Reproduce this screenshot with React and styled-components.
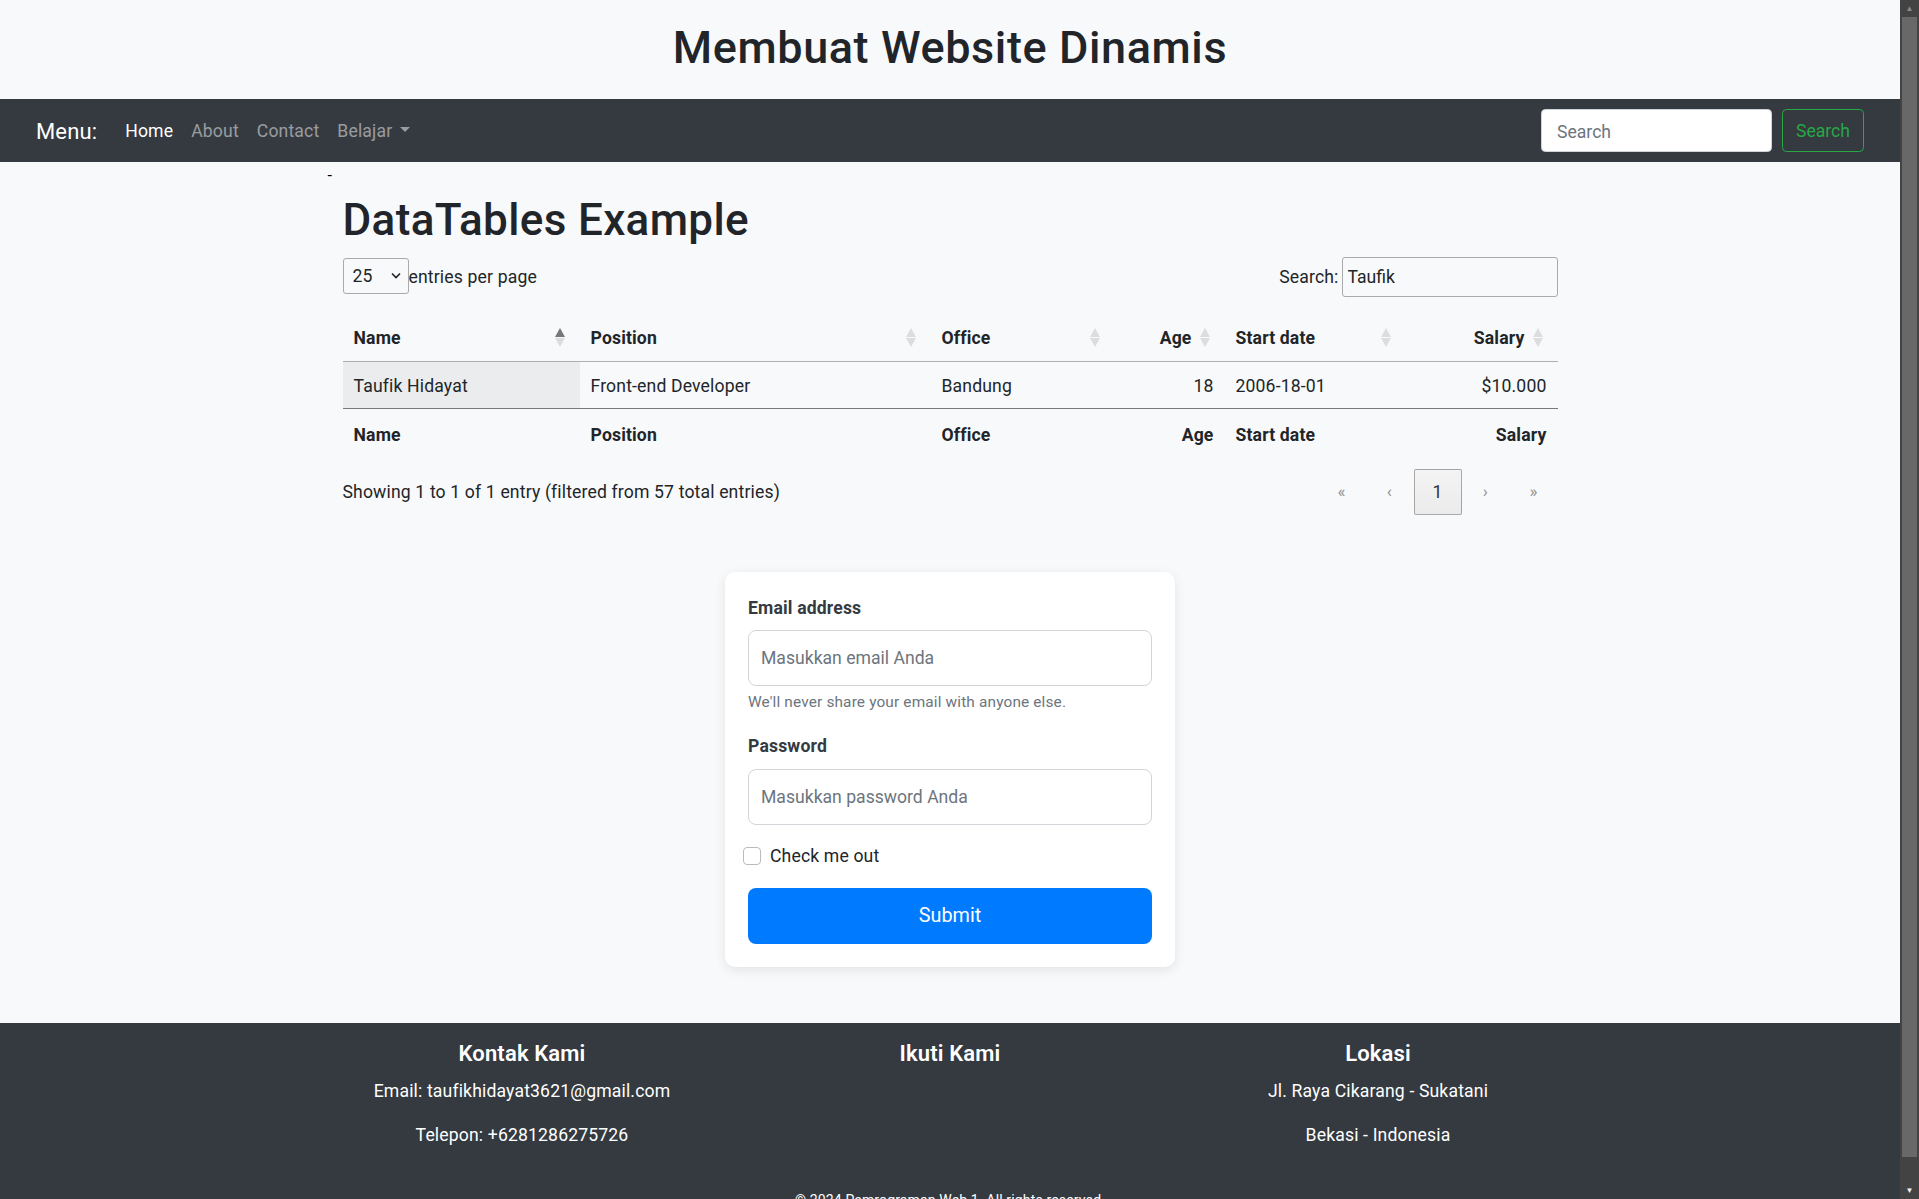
import styled, { createGlobalStyle } from 'styled-components';

const GlobalStyle = createGlobalStyle`
  html, body {
    margin: 0;
    padding: 0;
    overflow: hidden;
    background: #f8f9fa;
  }
  body {
    font-family: "Segoe UI", Roboto, "Helvetica Neue", Arial, sans-serif;
    font-size: 17.6px;
    line-height: 1.5;
    letter-spacing: 0.15px;
    color: #212529;
  }
  * { box-sizing: border-box; }
`;

const Shell = styled.div`
  display: flex;
  align-items: flex-start;
`;

const Page = styled.div`
  flex: 1;
  min-width: 0;
`;

/* fake browser scrollbar, as seen in the screenshot */
const Scrollbar = styled.div`
  width: 19px;
  height: 100vh;
  flex-shrink: 0;
  background: #434343;
  display: flex;
  flex-direction: column;
  align-items: center;
`;

const ScrollArrow = styled.div`
  height: 17px;
  display: flex;
  align-items: center;
  justify-content: center;
  color: ${p => (p.$dim ? '#8a8a8a' : '#f2f2f2')};
  font-size: 8px;
`;

const Thumb = styled.div`
  width: 15px;
  height: 1140px;
  background: #686868;
`;

const Header = styled.header`
  padding: 21px 0 25px;
  text-align: center;
`;

const Title = styled.h1`
  margin: 0;
  font-size: 45px;
  font-weight: 500;
  line-height: 53px;
  letter-spacing: 0.6px;
`;

const Navbar = styled.nav`
  display: flex;
  align-items: center;
  justify-content: space-between;
  height: 63px;
  padding: 0 36px;
  background: #343a40;
`;

const NavLeft = styled.div`
  display: flex;
  align-items: center;
  padding-top: 1px;
`;

const Brand = styled.span`
  color: #fff;
  font-size: 22px;
  margin-right: 19px;
`;

const NavLink = styled.a`
  padding: 0 9px;
  color: ${p => (p.$active ? '#fff' : 'rgba(255,255,255,0.5)')};
  text-decoration: none;
  font-size: 17.6px;
`;

const DropdownLink = styled(NavLink)`
  &::after {
    content: "";
    display: inline-block;
    margin-left: 0.45em;
    vertical-align: 0.255em;
    border-top: 0.3em solid;
    border-right: 0.3em solid transparent;
    border-left: 0.3em solid transparent;
  }
`;

const SearchForm = styled.form`
  display: flex;
  align-items: center;
  gap: 10px;
`;

const NavInput = styled.input`
  width: 231px;
  height: 43px;
  padding: 2px 15px 0;
  border: 1px solid #ced4da;
  border-radius: 4.4px;
  background: #fff;
  font: inherit;
  font-size: 17.6px;
  color: #495057;
  &::placeholder { color: #6c757d; }
`;

const OutlineButton = styled.button`
  height: 43px;
  width: 82px;
  padding-top: 2px;
  border: 1px solid #28a745;
  border-radius: 4.4px;
  background: transparent;
  color: #28a745;
  font: inherit;
  font-size: 17.6px;
`;

const Main = styled.main`
  padding-top: 2px;
`;

const Container = styled.div`
  width: 1215px;
  margin: 0 auto;
`;

const Stray = styled.div`
  margin-left: -15px;
  height: 24px;
  line-height: 24px;
  font-size: 16px;
  color: #000;
`;

const PageTitle = styled.h1`
  margin: 6px 0 9px;
  font-size: 44px;
  font-weight: 500;
  line-height: 1.2;
  letter-spacing: 0.35px;
`;

const TopBar = styled.div`
  display: flex;
  align-items: center;
  justify-content: space-between;
  height: 40px;
`;

const LengthControl = styled.label`
  display: flex;
  align-items: center;
  padding-top: 3px;
`;

const SelectWrap = styled.span`
  position: relative;
  display: inline-flex;
  margin-top: -3px;
`;

const Select = styled.select`
  appearance: none;
  width: 66px;
  height: 36px;
  padding: 0 0 0 9px;
  border: 1px solid #aaa;
  border-radius: 3px;
  background: transparent;
  font: inherit;
  font-size: 17.6px;
  color: #212529;
`;

const Chevron = styled.svg`
  position: absolute;
  right: 8px;
  top: 14px;
  pointer-events: none;
`;

const SearchLabel = styled.label`
  display: flex;
  align-items: center;
  padding-top: 2px;
`;

const FilterInput = styled.input`
  width: 216px;
  height: 40px;
  margin-left: 3px;
  padding: 1px 5px 0;
  border: 1px solid #aaa;
  border-radius: 3px;
  background: transparent;
  font: inherit;
  font-size: 17.6px;
  color: #212529;
`;

const Table = styled.table`
  width: 100%;
  margin-top: 19px;
  border-collapse: collapse;
  table-layout: fixed;
`;

const Th = styled.th`
  padding: 10px 15px 10px 11px;
  font-weight: 700;
  text-align: ${p => (p.$num ? 'right' : 'left')};
  border-bottom: 1px solid rgba(0, 0, 0, 0.3);
`;

const HeadInner = styled.div`
  display: flex;
  align-items: center;
  justify-content: ${p => (p.$num ? 'flex-end' : 'space-between')};
  gap: 8px;
`;

const Td = styled.td`
  padding: 11px 11px 8px;
  text-align: ${p => (p.$num ? 'right' : 'left')};
  background: ${p => (p.$sorted ? 'rgba(0,0,0,0.05)' : 'transparent')};
  border-bottom: 1px solid rgba(0, 0, 0, 0.3);
`;

const FootTh = styled.th`
  padding: 13px 11px 7px;
  font-weight: 700;
  text-align: ${p => (p.$num ? 'right' : 'left')};
`;

const BottomBar = styled.div`
  display: flex;
  align-items: center;
  justify-content: space-between;
  margin-top: 14px;
`;

const Pagination = styled.nav`
  display: flex;
`;

const PageButton = styled.span`
  width: 48px;
  height: 46px;
  display: flex;
  align-items: center;
  justify-content: center;
  border-radius: 2px;
  border: 1px solid ${p => (p.$current ? 'rgba(0,0,0,0.3)' : 'transparent')};
  background: ${p => (p.$current ? 'linear-gradient(to bottom, #f4f4f4 0%, #ebebeb 100%)' : 'transparent')};
  color: ${p => (p.$current ? '#333' : '#8f8f8f')};
  font-size: ${p => (p.$current ? '17.6px' : '17px')};
`;

const Card = styled.form`
  width: 450px;
  margin: 57px auto 56px;
  padding: 23px;
  background: #fff;
  border-radius: 10px;
  box-shadow: 0 3px 12px rgba(0, 0, 0, 0.09);
`;

const Group = styled.div`
  margin-bottom: 20px;
`;

const Label = styled.label`
  display: block;
  margin-bottom: 9px;
  font-weight: 700;
  color: #343a40;
`;

const Input = styled.input`
  display: block;
  width: 100%;
  height: 56px;
  padding: 0 12px;
  border: 1px solid #d1d5da;
  border-radius: 8px;
  background: #fff;
  font: inherit;
  font-size: 17.6px;
  color: #495057;
  &::placeholder { color: #6c757d; }
`;

const Help = styled.small`
  display: block;
  margin-top: 6px;
  font-size: 15.4px;
  line-height: 21px;
  color: #6c757d;
`;

const CheckRow = styled.label`
  display: flex;
  align-items: center;
  gap: 9px;
  margin-left: -5px;
  margin-top: -2px;
`;

const CheckBox = styled.span`
  width: 18px;
  height: 18px;
  border: 1px solid #b9bdc2;
  border-radius: 4px;
  background: #fff;
`;

const SubmitButton = styled.button`
  display: block;
  width: 100%;
  height: 56px;
  margin-top: 19px;
  border: none;
  border-radius: 8px;
  background: #007bff;
  color: #fff;
  font: inherit;
  font-size: 19.8px;
`;

const Footer = styled.footer`
  background: #343a40;
  color: #fff;
  padding-top: 17px;
  text-align: center;
`;

const FooterRow = styled.div`
  display: grid;
  grid-template-columns: repeat(3, 428px);
  justify-content: center;
`;

const FooterHeading = styled.h5`
  margin: 0 0 10px;
  font-size: 22px;
  font-weight: 600;
  line-height: 1.25;
`;

const FooterText = styled.p`
  margin: 0 0 18px;
`;

const Copyright = styled.p`
  margin: 24px 0 0;
  padding-bottom: 16px;
  font-size: 14px;
  line-height: 21px;
`;

const SortIcon = ({ active }) => (
  <svg width="10" height="19" viewBox="0 0 10 19">
    <polygon points="0,9 5,0 10,9" fill={active ? '#777' : '#ddd'} />
    <polygon points="0,10 5,19 10,10" fill="#ddd" />
  </svg>
);

const columns = [
  { key: 'name', label: 'Name', width: 237, active: true },
  { key: 'position', label: 'Position', width: 351 },
  { key: 'office', label: 'Office', width: 184 },
  { key: 'age', label: 'Age', width: 110, num: true },
  { key: 'start', label: 'Start date', width: 181 },
  { key: 'salary', label: 'Salary', width: 152, num: true },
];

const rows = [
  { name: 'Taufik Hidayat', position: 'Front-end Developer', office: 'Bandung', age: '18', start: '2006-18-01', salary: '$10.000' },
];

export default function App() {
  return (
    <>
      <GlobalStyle />
      <Shell>
        <Page>
          <Header>
            <Title>Membuat Website Dinamis</Title>
          </Header>

          <Navbar>
            <NavLeft>
              <Brand>Menu:</Brand>
              <NavLink $active href="#">Home</NavLink>
              <NavLink href="#">About</NavLink>
              <NavLink href="#">Contact</NavLink>
              <DropdownLink href="#">Belajar</DropdownLink>
            </NavLeft>
            <SearchForm onSubmit={e => e.preventDefault()}>
              <NavInput placeholder="Search" />
              <OutlineButton type="button">Search</OutlineButton>
            </SearchForm>
          </Navbar>

          <Main>
            <Container>
              <Stray>-</Stray>
              <PageTitle>DataTables Example</PageTitle>
              <TopBar>
                <LengthControl>
                  <SelectWrap>
                    <Select defaultValue="25">
                      <option>10</option>
                      <option>25</option>
                      <option>50</option>
                    </Select>
                    <Chevron width="10" height="7" viewBox="0 0 10 7">
                      <path d="M1 1.5 L5 5.5 L9 1.5" fill="none" stroke="#222" strokeWidth="1.6" />
                    </Chevron>
                  </SelectWrap>
                  <span>entries per page</span>
                </LengthControl>
                <SearchLabel>
                  Search:
                  <FilterInput defaultValue="Taufik" />
                </SearchLabel>
              </TopBar>

              <Table>
                <colgroup>
                  {columns.map(c => (
                    <col key={c.key} style={{ width: c.width }} />
                  ))}
                </colgroup>
                <thead>
                  <tr>
                    {columns.map(c => (
                      <Th key={c.key} $num={c.num}>
                        <HeadInner $num={c.num}>
                          <span>{c.label}</span>
                          <SortIcon active={c.active} />
                        </HeadInner>
                      </Th>
                    ))}
                  </tr>
                </thead>
                <tbody>
                  {rows.map(r => (
                    <tr key={r.name}>
                      {columns.map(c => (
                        <Td key={c.key} $num={c.num} $sorted={c.active}>
                          {r[c.key]}
                        </Td>
                      ))}
                    </tr>
                  ))}
                </tbody>
                <tfoot>
                  <tr>
                    {columns.map(c => (
                      <FootTh key={c.key} $num={c.num}>{c.label}</FootTh>
                    ))}
                  </tr>
                </tfoot>
              </Table>

              <BottomBar>
                <span>Showing 1 to 1 of 1 entry (filtered from 57 total entries)</span>
                <Pagination>
                  <PageButton>«</PageButton>
                  <PageButton>‹</PageButton>
                  <PageButton $current>1</PageButton>
                  <PageButton>›</PageButton>
                  <PageButton>»</PageButton>
                </Pagination>
              </BottomBar>
            </Container>

            <Card onSubmit={e => e.preventDefault()}>
              <Group>
                <Label>Email address</Label>
                <Input type="email" placeholder="Masukkan email Anda" />
                <Help>We'll never share your email with anyone else.</Help>
              </Group>
              <Group>
                <Label>Password</Label>
                <Input type="password" placeholder="Masukkan password Anda" />
              </Group>
              <CheckRow>
                <CheckBox />
                Check me out
              </CheckRow>
              <SubmitButton type="submit">Submit</SubmitButton>
            </Card>
          </Main>

          <Footer>
            <FooterRow>
              <div>
                <FooterHeading>Kontak Kami</FooterHeading>
                <FooterText>Email: taufikhidayat3621@gmail.com</FooterText>
                <FooterText>Telepon: +6281286275726</FooterText>
              </div>
              <div>
                <FooterHeading>Ikuti Kami</FooterHeading>
              </div>
              <div>
                <FooterHeading>Lokasi</FooterHeading>
                <FooterText>Jl. Raya Cikarang - Sukatani</FooterText>
                <FooterText>Bekasi - Indonesia</FooterText>
              </div>
            </FooterRow>
            <Copyright>© 2024 Pemrograman Web 1. All rights reserved.</Copyright>
          </Footer>
        </Page>

        <Scrollbar>
          <ScrollArrow $dim>▲</ScrollArrow>
          <Thumb />
          <div style={{ flex: 1 }} />
          <ScrollArrow>▼</ScrollArrow>
        </Scrollbar>
      </Shell>
    </>
  );
}
